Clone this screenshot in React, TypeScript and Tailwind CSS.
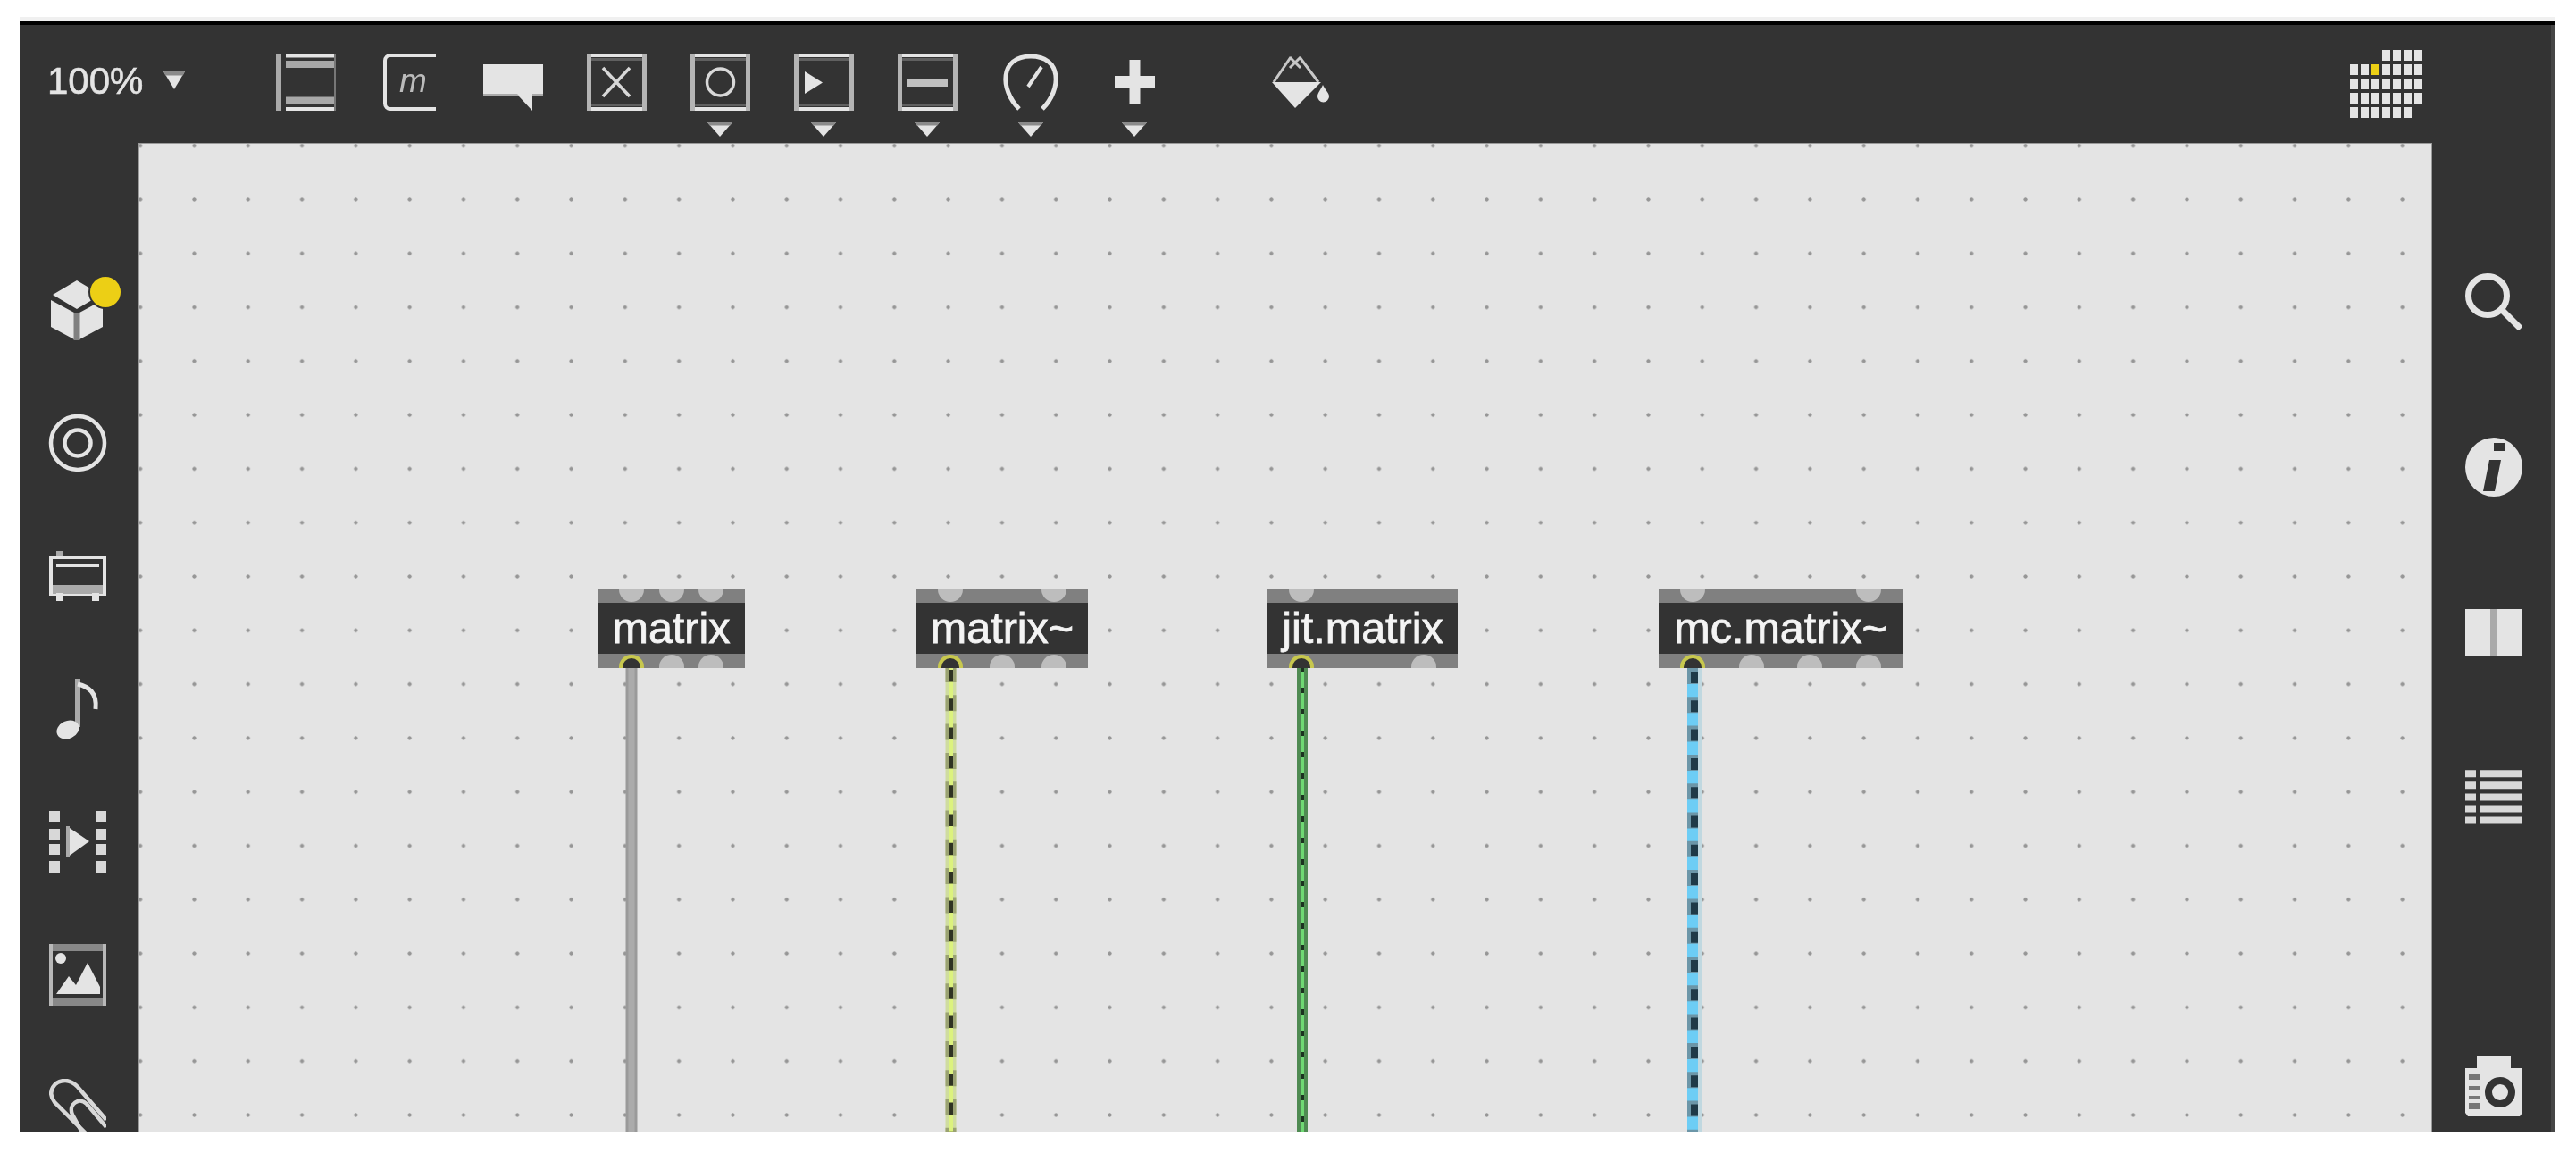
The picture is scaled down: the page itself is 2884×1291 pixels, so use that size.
const font = "font-['Liberation_Sans',Arial,sans-serif]";

function Caret({ className }: { className: string }) {
  return (
    <svg viewBox="0 0 28 16" preserveAspectRatio="none" className={className}>
      <path d="M0 0h28L14 16z" fill="#e4e4e4" />
      <path d="M0 0h28l-2.500 3.500h-23z" fill="#8a8a8a" />
    </svg>
  );
}

function ToolCell({ children, caret }: { children: React.ReactNode; caret?: boolean }) {
  return (
    <div className="flex h-full w-[116px] shrink-0 flex-col items-center pt-[32px]">
      <div className="flex h-[64px] items-center justify-center">{children}</div>
      {caret && <Caret className="mt-[13px] h-[16px] w-[28px]" />}
    </div>
  );
}

const c = "#e4e4e4";

function BoxOutline({ children }: { children?: React.ReactNode }) {
  return (
    <svg viewBox="0 0 67 64" className="h-[64px] w-[67px]">
      <path d="M5 6.500h57M5 57.500h57" stroke="#606060" strokeWidth="3" />
      <path d="M0 2h67M0 62h67" stroke={c} strokeWidth="4" />
      <path d="M2.500 0v64M64.500 0v64" stroke="#b4b4b4" strokeWidth="5" />
      {children}
    </svg>
  );
}

function PatcherIcon() {
  return (
    <svg viewBox="0 0 67 64" className="h-[64px] w-[67px]">
      <path d="M3 0v64" stroke="#aaa" strokeWidth="6" />
      <path d="M11 2.500h56M11 62h56" stroke={c} strokeWidth="4" />
      <path d="M11 12h56M11 52.500h56" stroke="#a8a8a8" strokeWidth="8" />
      <path d="M66 0v64" stroke="#777" strokeWidth="2" />
    </svg>
  );
}

function MessageIcon() {
  return (
    <svg viewBox="0 0 60 64" className="h-[64px] w-[60px]">
      <path d="M60 2H9a6 6 0 0 0-6 6v48a6 6 0 0 0 6 6h51" fill="none" stroke={c} strokeWidth="4" />
      <text x="19" y="43" fill="#bbbbbb" fontSize="37" fontStyle="italic" fontFamily="Liberation Sans">
        m
      </text>
    </svg>
  );
}

function CommentIcon() {
  return (
    <svg viewBox="0 0 67 52" className="mt-[12px] h-[52px] w-[67px]">
      <path d="M0 0h67v36H55v16L40 36H0z" fill={c} />
      <path d="M0 33h38l3 3H0zM55 33h12v3H55z" fill="#aaa" />
    </svg>
  );
}

function DialIcon() {
  return (
    <svg viewBox="0 0 66 64" className="h-[64px] w-[66px]">
      <path d="M20 62C-2 40-2 3 33 3s35 37 13 59" fill="none" stroke={c} strokeWidth="5" />
      <path d="M30 37l15-22" stroke={c} strokeWidth="4" />
    </svg>
  );
}

function PlusIcon() {
  return (
    <svg viewBox="0 0 45 50" className="h-[50px] w-[45px]">
      <path d="M22.500 0v50" stroke={c} strokeWidth="12" />
      <path d="M0 25h45" stroke={c} strokeWidth="14" />
    </svg>
  );
}

function BucketIcon() {
  return (
    <svg viewBox="0 0 66 60" className="h-[60px] w-[66px]">
      <path d="M22 2L3 30M32 2l21 28M21 2l12 12M33 2L21 14" fill="none" stroke="#c8c8c8" strokeWidth="3" />
      <path d="M1 30h55L27 59z" fill={c} />
      <path d="M58 33c2 5 7 9 7 13a6.500 6.500 0 0 1-13 0c0-4 4-8 6-13z" fill={c} />
    </svg>
  );
}

function GridIcon() {
  const rows = [
    [0, 0, 0, 1, 1, 1, 1],
    [1, 1, 2, 1, 1, 1, 1],
    [1, 1, 1, 1, 1, 1, 1],
    [1, 1, 1, 1, 1, 1, 1],
    [1, 1, 1, 1, 1, 1, 0],
  ];
  return (
    <div className="mt-[28px] flex flex-col gap-[3.700px]">
      {rows.map((row, i) => (
        <div key={i} className="flex gap-[3.300px]">
          {row.map((v, j) => (
            <div
              key={j}
              className={
                v === 0
                  ? "h-[12.300px] w-[8.700px]"
                  : v === 2
                  ? "h-[12.300px] w-[8.700px] bg-[#eccf15]"
                  : "h-[12.300px] w-[8.700px] bg-[#e4e4e4]"
              }
            />
          ))}
        </div>
      ))}
    </div>
  );
}

function Toolbar() {
  return (
    <div className="flex h-[132px] shrink-0 items-start bg-[#333333]">
      <div className={`${font} flex w-[262px] shrink-0 items-start pl-[31px] pt-[41px] text-[#e4e4e4]`}>
        <span className="text-[42px] leading-[44px] [-webkit-text-stroke:0.6px_#e4e4e4]">100%</span>
        <Caret className="ml-[23px] mt-[11px] h-[20px] w-[24px]" />
      </div>
      <ToolCell><PatcherIcon /></ToolCell>
      <ToolCell><MessageIcon /></ToolCell>
      <ToolCell><CommentIcon /></ToolCell>
      <ToolCell>
        <BoxOutline>
          <path d="M18 16l30 32M48 16L18 48" stroke="#d8d8d8" strokeWidth="3.500" />
        </BoxOutline>
      </ToolCell>
      <ToolCell caret>
        <BoxOutline>
          <circle cx="33.500" cy="32" r="15" fill="none" stroke="#d8d8d8" strokeWidth="3.500" />
        </BoxOutline>
      </ToolCell>
      <ToolCell caret>
        <BoxOutline>
          <path d="M12 20l20 12.500L12 45z" fill={c} />
        </BoxOutline>
      </ToolCell>
      <ToolCell caret>
        <BoxOutline>
          <path d="M11 32.500h45" stroke="#c0c0c0" strokeWidth="9" />
        </BoxOutline>
      </ToolCell>
      <ToolCell caret><DialIcon /></ToolCell>
      <ToolCell caret><PlusIcon /></ToolCell>
      <div className="ml-[70px]">
        <ToolCell><BucketIcon /></ToolCell>
      </div>
      <div className="ml-auto mr-[144px]">
        <GridIcon />
      </div>
    </div>
  );
}

function LeftBar() {
  return (
    <div className="flex w-[133px] shrink-0 flex-col items-center bg-[#333333] pr-[3px] pt-[112px]">
      <div className="flex h-[149px] w-full shrink-0 items-center justify-center">
        <svg viewBox="0 0 66 70" className="h-[70px] w-[66px] overflow-visible">
          <path d="M32 2L5 18l27 16 27-16z" fill={c} />
          <path d="M3 24l26 14v30L3 54zM35 38l26-14v30L35 68z" fill={c} />
          <path d="M32 38v31" stroke="#808080" strokeWidth="7" />
          <circle cx="64" cy="15" r="18" fill="#eccf15" stroke="#333333" strokeWidth="2" />
        </svg>
      </div>
      <div className="flex h-[149px] w-full shrink-0 items-center justify-center">
        <svg viewBox="0 0 66 66" className="h-[66px] w-[66px]">
          <circle cx="33" cy="33" r="30" fill="none" stroke={c} strokeWidth="4.500" />
          <circle cx="33" cy="33" r="14.500" fill="none" stroke={c} strokeWidth="4.500" />
        </svg>
      </div>
      <div className="flex h-[149px] w-full shrink-0 items-center justify-center">
        <svg viewBox="0 0 64 56" className="h-[56px] w-[64px]">
          <path d="M8 0h8v6H8z" fill="#aaa" />
          <rect x="2" y="7" width="60" height="41" fill="none" stroke={c} strokeWidth="4" />
          <path d="M8 16h48" stroke={c} strokeWidth="4" />
          <path d="M4 38h56v10H4z" fill="#aaa" />
          <path d="M8 47h8v9H8zM48 47h8v9h-8z" fill={c} />
        </svg>
      </div>
      <div className="flex h-[149px] w-full shrink-0 items-center justify-center">
        <svg viewBox="0 0 48 68" className="h-[68px] w-[48px]">
          <path d="M24 0v54" stroke="#aaa" strokeWidth="6" />
          <path d="M24 6c12 3 22 9 20 28" fill="none" stroke={c} strokeWidth="5" />
          <ellipse cx="13" cy="57" rx="13" ry="10" transform="rotate(-25 13 57)" fill={c} />
        </svg>
      </div>
      <div className="flex h-[149px] w-full shrink-0 items-center justify-center">
        <svg viewBox="0 0 64 69" className="h-[69px] w-[64px]">
          <path d="M0 0h12v12H0zM0 20h12v12H0zM0 37h12v12H0zM0 56h12v13H0zM52 0h12v12H52zM52 20h12v12H52zM52 37h12v12H52zM52 56h12v13H52z" fill="#d8d8d8" />
          <path d="M20 17l25 17-25 18z" fill={c} />
          <path d="M21 17v35" stroke="#aaa" strokeWidth="4" />
        </svg>
      </div>
      <div className="flex h-[149px] w-full shrink-0 items-center justify-center">
        <svg viewBox="0 0 64 69" className="h-[69px] w-[64px]">
          <path d="M8 56l14-20 8 10 13-25 14 27v8z" fill={c} />
          <circle cx="13" cy="16" r="6" fill={c} />
          <path d="M0 4h64M0 65h64" stroke="#888" strokeWidth="8" />
          <path d="M2 0v69M62 0v69" stroke="#b8b8b8" strokeWidth="4" />
        </svg>
      </div>
      <div className="flex h-[149px] w-full shrink-0 items-center justify-center">
        <svg viewBox="0 0 64 80" className="mt-[14px] h-[80px] w-[64px]">
          <path d="M60 80L6 26C-3 14 6 2 18 2c6 0 10 3 14 7l32 37" fill="none" stroke="#d8d8d8" strokeWidth="4.500" />
          <path d="M48 80L26 40c-5-12 8-20 16-12l22 26" fill="none" stroke="#d8d8d8" strokeWidth="4.500" />
        </svg>
      </div>
    </div>
  );
}

function RightBar() {
  return (
    <div className="flex w-[133px] shrink-0 flex-col items-center bg-[#333333] pb-[17px] pl-[5px] pt-[85px]">
      <div className="flex h-[185px] w-full shrink-0 items-center justify-center">
        <svg viewBox="0 0 64 65" className="h-[65px] w-[64px]">
          <circle cx="25" cy="26" r="21.500" fill="none" stroke={c} strokeWidth="7" />
          <path d="M41 42l21 21" stroke={c} strokeWidth="7" />
        </svg>
      </div>
      <div className="flex h-[185px] w-full shrink-0 items-center justify-center">
        <svg viewBox="0 0 64 66" className="h-[66px] w-[64px]">
          <ellipse cx="32" cy="33" rx="32" ry="33" fill={c} />
          <path d="M32 6h12v9H32zM27 25h13l-7 35H20z" fill="#333" />
        </svg>
      </div>
      <div className="flex h-[185px] w-full shrink-0 items-center justify-center">
        <svg viewBox="0 0 64 52" className="h-[52px] w-[64px]">
          <path d="M0 0h64v52H0z" fill={c} />
          <path d="M28 0h8v52h-8z" fill="#aaa" />
        </svg>
      </div>
      <div className="flex h-[185px] w-full shrink-0 items-center justify-center">
        <svg viewBox="0 0 64 61" className="h-[61px] w-[64px]">
          <path d="M0 4.300h12M16 4.300h48M0 17.300h12M16 17.300h48M0 30.400h12M16 30.400h48M0 43.400h12M16 43.400h48M0 56.400h12M16 56.400h48" stroke="#d8d8d8" strokeWidth="8" />
        </svg>
      </div>
      <div className="mt-auto flex w-full justify-center">
        <svg viewBox="0 0 64 68" className="h-[68px] w-[64px]">
          <path d="M13 14V0h38v14h13v50l-3 4H3l-3-4V14z" fill={c} />
          <path d="M4 20h12v7H4zM4 34h12v5H4zM4 45h12v4H4zM4 53h12v7H4z" fill="#777" />
          <circle cx="39" cy="41" r="13" fill={c} stroke="#333" strokeWidth="8" />
        </svg>
      </div>
    </div>
  );
}

function Port({ kind }: { kind: "in" | "out" | "hot" }) {
  if (kind === "in") return <div className="h-[15px] w-[28px] rounded-b-[14px] bg-[#bdbdbd]" />;
  if (kind === "out") return <div className="mt-[1px] h-[15px] w-[28px] rounded-t-[14px] bg-[#bdbdbd]" />;
  return (
    <div className="mt-[1px] flex h-[15px] w-[28px] justify-center rounded-t-[14px] bg-[#c8c84e] pt-[4px]">
      <div className="h-[11px] w-[20px] rounded-t-[10px] bg-[#333333]" />
    </div>
  );
}

function MatrixObject({ label, className, inlets, outlets }: { label: string; className: string; inlets: number; outlets: number }) {
  return (
    <div className={`absolute top-[498px] flex h-[89px] flex-col ${className}`}>
      <div className="flex h-[16px] justify-between bg-[#808080] pl-[24px] pr-[24px]">
        {Array.from({ length: inlets }, (_, i) => <Port key={i} kind="in" />)}
      </div>
      <div className={`${font} flex h-[57px] items-center justify-center bg-[#333333] text-[48.500px] leading-[57px] text-[#f4f4f4] [-webkit-text-stroke:0.8px_#f4f4f4]`}>
        {label}
      </div>
      <div className="flex h-[16px] justify-between bg-[#808080] pl-[24px] pr-[24px]">
        {Array.from({ length: outlets }, (_, i) => <Port key={i} kind={i === 0 ? "hot" : "out"} />)}
      </div>
    </div>
  );
}

function Cords() {
  return (
    <svg className="absolute left-0 top-0 h-full w-full" viewBox="0 0 2566 1106">
      <path d="M551 587v519" stroke="#9a9a9a" strokeWidth="13" />
      <path d="M551 587v519" stroke="#ababab" strokeWidth="7" />

      <path d="M908.500 587v519" stroke="#cfdca0" strokeWidth="12" />
      <path d="M908.500 585v521" stroke="#9aa272" strokeWidth="12" strokeDasharray="18 14.300" />
      <path d="M908.500 587v519" stroke="#dcf27e" strokeWidth="5" />
      <path d="M908.500 589v517" stroke="#2f3322" strokeWidth="5" strokeDasharray="13.500 18.800" />

      <path d="M1302 587v519" stroke="#4f8a52" strokeWidth="12" />
      <path d="M1302 587v519" stroke="#6fd873" strokeWidth="4" />
      <path d="M1302 585v521" stroke="#1c3320" strokeWidth="4" strokeDasharray="6 18" />

      <path d="M1747 587v519" stroke="#c0d8e0" strokeWidth="4" />
      <path d="M1739 587v519" stroke="#6dcdf5" strokeWidth="12" />
      <path d="M1739 587v519" stroke="#6c96a8" strokeWidth="12" strokeDasharray="18 14.300" />
      <path d="M1741 591v515" stroke="#1f3a48" strokeWidth="8" strokeDasharray="13 19.300" />
    </svg>
  );
}

function Canvas() {
  return (
    <div className="relative min-w-0 flex-1 border-l-[1px] border-r-[1px] border-t-[1px] border-[#9a9a9a] bg-[#e4e4e4] bg-[radial-gradient(circle,#969696_1.800px,transparent_2.400px)] bg-size-[60.300px_60.300px] bg-position-[-29px_-28px]">
      <Cords />
      <MatrixObject label="matrix" className="left-[513px] w-[165px]" inlets={3} outlets={3} />
      <MatrixObject label="matrix~" className="left-[870px] w-[192px]" inlets={2} outlets={3} />
      <MatrixObject label="jit.matrix" className="left-[1263px] w-[213px]" inlets={1} outlets={2} />
      <MatrixObject label="mc.matrix~" className="left-[1701px] w-[273px]" inlets={2} outlets={4} />
    </div>
  );
}

export default function App() {
  return (
    <div className="h-[1291px] w-[2884px] overflow-hidden bg-white pl-[22px] pt-[19px]">
      <div className="flex h-[1248px] w-[2839px] flex-col blur-[0.7px]">
        <div className="h-[4px] shrink-0 bg-[#f0f0f0]" />
        <div className="h-[5px] shrink-0 bg-black" />
        <div className="flex min-h-0 flex-1 flex-col overflow-hidden border-r-[5px] border-[#464646]">
          <Toolbar />
          <div className="flex min-h-0 flex-1 overflow-hidden">
            <LeftBar />
            <Canvas />
            <RightBar />
          </div>
        </div>
      </div>
    </div>
  );
}
